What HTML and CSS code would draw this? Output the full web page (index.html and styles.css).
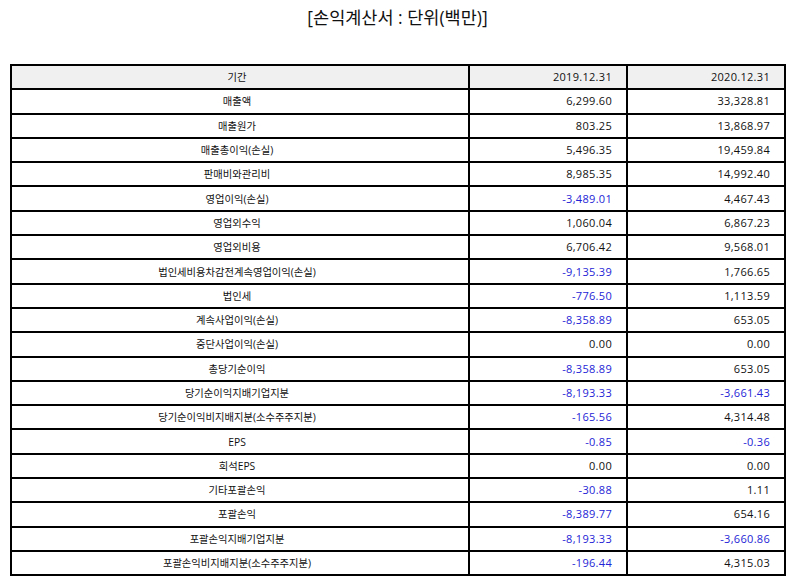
FILE: index.html
```html
<!DOCTYPE html>
<html lang="ko">
<head>
<meta charset="utf-8">
<title>손익계산서</title>
<link rel="stylesheet" href="styles.css">
</head>
<body>
<div class="page">
  <h1 class="title">[손익계산서 : 단위(백만)]</h1>
  <table class="fin">
    <colgroup>
      <col class="c-label">
      <col class="c-num">
      <col class="c-num">
    </colgroup>
    <thead>
      <tr><th class="label">기간</th><th class="num">2019.12.31</th><th class="num">2020.12.31</th></tr>
    </thead>
    <tbody>
      <tr><td class="label">매출액</td><td class="num">6,299.60</td><td class="num">33,328.81</td></tr>
      <tr><td class="label">매출원가</td><td class="num">803.25</td><td class="num">13,868.97</td></tr>
      <tr><td class="label">매출총이익(손실)</td><td class="num">5,496.35</td><td class="num">19,459.84</td></tr>
      <tr><td class="label">판매비와관리비</td><td class="num">8,985.35</td><td class="num">14,992.40</td></tr>
      <tr><td class="label">영업이익(손실)</td><td class="num neg">-3,489.01</td><td class="num">4,467.43</td></tr>
      <tr><td class="label">영업외수익</td><td class="num">1,060.04</td><td class="num">6,867.23</td></tr>
      <tr><td class="label">영업외비용</td><td class="num">6,706.42</td><td class="num">9,568.01</td></tr>
      <tr><td class="label">법인세비용차감전계속영업이익(손실)</td><td class="num neg">-9,135.39</td><td class="num">1,766.65</td></tr>
      <tr><td class="label">법인세</td><td class="num neg">-776.50</td><td class="num">1,113.59</td></tr>
      <tr><td class="label">계속사업이익(손실)</td><td class="num neg">-8,358.89</td><td class="num">653.05</td></tr>
      <tr><td class="label">중단사업이익(손실)</td><td class="num">0.00</td><td class="num">0.00</td></tr>
      <tr><td class="label">총당기순이익</td><td class="num neg">-8,358.89</td><td class="num">653.05</td></tr>
      <tr><td class="label">당기순이익지배기업지분</td><td class="num neg">-8,193.33</td><td class="num neg">-3,661.43</td></tr>
      <tr><td class="label">당기순이익비지배지분(소수주주지분)</td><td class="num neg">-165.56</td><td class="num">4,314.48</td></tr>
      <tr><td class="label">EPS</td><td class="num neg">-0.85</td><td class="num neg">-0.36</td></tr>
      <tr><td class="label">희석EPS</td><td class="num">0.00</td><td class="num">0.00</td></tr>
      <tr><td class="label">기타포괄손익</td><td class="num neg">-30.88</td><td class="num">1.11</td></tr>
      <tr><td class="label">포괄손익</td><td class="num neg">-8,389.77</td><td class="num">654.16</td></tr>
      <tr><td class="label">포괄손익지배기업지분</td><td class="num neg">-8,193.33</td><td class="num neg">-3,660.86</td></tr>
      <tr><td class="label">포괄손익비지배지분(소수주주지분)</td><td class="num neg">-196.44</td><td class="num">4,315.03</td></tr>
    </tbody>
  </table>
</div>
</body>
</html>
```

FILE: styles.css
```css
html, body {
  margin: 0;
  padding: 0;
  background: #ffffff;
}

.page {
  padding: 0 9px 0 10px;
  font-family: "Open Sans", "Noto Sans CJK KR", sans-serif;
  color: #111111;
}

.title {
  margin: 6px 0 36px;
  font-size: 17.5px;
  line-height: 22px;
  font-weight: 400;
  text-align: center;
  color: #111111;
}

.fin {
  width: 775px;
  border-collapse: collapse;
  table-layout: fixed;
  font-size: 10.3px;
}

.c-label { width: 458px; }
.c-num { width: 158px; }

.fin th,
.fin td {
  border: 2px solid #000000;
  height: 22.3px;
  padding: 0 14px 0 8px;
  line-height: 14px;
  font-weight: 400;
  white-space: nowrap;
}

.fin thead th {
  background: #f0f0f0;
}

.label {
  text-align: center;
}

.fin .num {
  text-align: right;
  font-size: 11px;
  letter-spacing: 0.3px;
  padding-right: 14px;
}

.neg {
  color: #2424d6;
}
```
